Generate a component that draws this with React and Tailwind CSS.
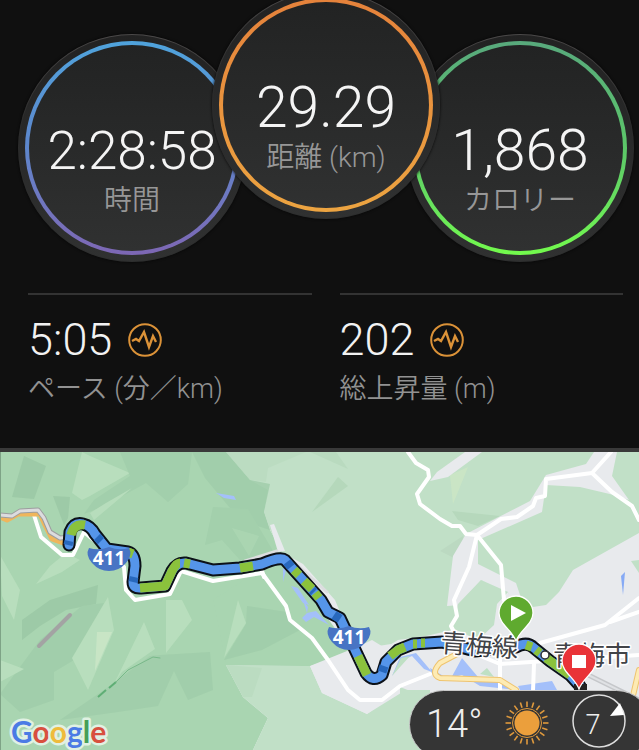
const TERRAIN = [
  { fill: "#9bc8a5", points: "24,456 46,466 34,499 12,497" },
  { fill: "#9bc8a5", points: "53,496 70,497 68,518 64,525" },
  { fill: "#bce1c0", points: "82,452 90,456 130,473 90,496 82,500 72,493 78,468" },
  { fill: "#a1ceab", points: "120,452 192,452 188,484 168,502 146,483 104,506 84,514 94,500 130,476" },
  { fill: "#bbe0bf", points: "132,488 94,520 90,513 106,503" },
  { fill: "#a0cdaa", points: "192,452 226,452 250,480 270,484 264,512 270,530 240,520 205,478" },
  { fill: "#a2cfac", points: "213,507 248,509 276,556 240,560 222,540 205,545" },
  { fill: "#abd6b2", points: "232,528 259,536 249,556" },
  { fill: "#bce1c0", points: "0,555 20,590 14,620 2,596" },
  { fill: "#bce1c0", points: "66,553 50,566 36,584 62,572 80,560" },
  { fill: "#9bc8a5", points: "50,600 98,585 96,604 66,610 40,626 22,640 22,620" },
  { fill: "#a0cdaa", points: "40,640 82,606 104,603 74,660 54,672 54,700 20,712 0,694" },
  { fill: "#bce1c0", points: "108,597 114,630 88,690 72,658" },
  { fill: "#d0eacb", points: "97,632 112,632 95,671" },
  { fill: "#bce1c0", points: "144,622 155,649 122,672 114,684" },
  { fill: "#bce1c0", points: "166,600 182,600 192,620 166,653" },
  { fill: "#bce1c0", points: "0,660 24,669 0,682" },
  { fill: "#bce1c0", points: "238,600 246,623 224,658" },
  { fill: "#a0cdaa", points: "160,655 210,652 213,690 188,700 174,671 158,706 118,712 60,720 104,690 150,656" },
  { fill: "#a0cdaa", points: "247,606 287,612 300,630 262,650 224,660 246,624" },
];

const PARKS = [
  { fill: "#c1e0c7", points: "226,452 639,452 639,533 573,570 559,592 546,605 533,607 516,611 506,588 481,580 457,605 452,630 426,636 398,640 385,648 372,640 355,648 335,600 303,564 283,553 270,530 264,512 268,490 250,480" },
  { fill: "#c1e0c7", points: "226,665 310,666 322,693 367,714 400,690 430,690 430,750 253,750 268,718 243,697" },
  { fill: "#bbdcc1", points: "226,452 306,452 268,468 266,482 250,480" },
  { fill: "#bbdcc1", points: "226,665 262,668 252,697 243,697" },
  { fill: "#b5d8bb", points: "338,477 348,486 312,512" },
  { fill: "#b9dabf", points: "310,452 336,452 348,469" },
  { fill: "#cae5c5", points: "450,475 468,467 453,504" },
  { fill: "#b6d8bc", points: "452,511 500,516 478,526 458,520" },
  { fill: "#bbd9c1", points: "463,536 462,562 440,551" },
];

const TOWNS = [
  "465,452 482,452 448,477 430,481 437,472",
  "594,452 617,452 612,476 629,500 614,495 580,487 546,485 542,512 478,540 478,564 516,583 523,604 512,615 508,592 481,580 460,605 447,606 453,556 466,534 530,501 546,475 586,464",
  "270,525 274,524 285,551 278,552",
];

const ROADS = [
  "33,512 41,537 62,555 73,555 84,532 108,552 124,567 126,590 135,600 170,594 181,571 213,581 262,573 286,606 290,620 312,638 328,660 348,690 360,700 382,700 400,686 430,674",
  "261,568 264,577",
  "408,452 416,463 428,470 429,477 417,494 420,504 440,519 452,526 460,526 466,534 477,535 501,519 517,517 533,506 536,498 545,496 546,479 592,473 611,452",
  "592,473 612,492 632,506 639,520",
  "477,535 469,567 454,600 457,616 451,626 458,640 478,655 500,664 639,655",
  "477,535 501,565 504,600 512,614",
  "540,643 605,625 639,598",
  "610,622 639,612",
  "500,640 500,691",
  "534,664 533,691",
];

const ROUTE =
  "M69 545 L70 532 Q74 522 83 524 Q91 526 95 534 L107 549 L128 552 Q135 554 135 566 L133 582 Q133 589 141 588 L165 586 L172 571 Q177 562 186 563 L213 570 L240 568 L262 564 Q280 556 285 560 L303 580 L321 600 L328 612 L340 618 L348 635 L366 673 Q373 683 382 675 L386 662 L398 650 L413 644 L442 642 L475 651 L516 647 Q527 641 534 648 L550 661 L570 675 L580 686";

const GREEN_LEGS = [
  "M71 535 Q74 523 85 525",
  "M128 552 L133 554",
  "M140 588 L165 586 L172 571 Q176 563 180 563",
  "M184 563 L190 564",
  "M240 568 L253 566",
  "M294 570 L299 575",
  "M304 581 L312 589",
  "M315 593 L319 598",
  "M358 656 L367 675",
  "M390 656 L398 650 L405 647",
  "M413 644 L417 644",
  "M421 643 L425 643",
  "M526 645 L532 647",
  "M536 650 L540 653",
  "M546 658 L570 675",
];

const DARK_LEGS = [
  "M68 545 L69 541",
  "M97 537 L101 541",
  "M134 577 L133 582",
  "M287 562 L291 567",
  "M312 590 L314 592",
  "M334 615 L340 619",
  "M382 672 L384 666",
];

function Line({ d, color, width, cap = "round" }) {
  return <path d={d} fill="none" stroke={color} strokeWidth={width} strokeLinecap={cap} strokeLinejoin="round" />;
}

function RouteBadge({ x, y }) {
  return (
    <g transform={`translate(${x} ${y})`}>
      <path d="M-20 -11 Q-10 -8 0 -12 Q10 -8 20 -11 Q24 -4 17 4 Q10 12 0 12 Q-10 12 -17 4 Q-24 -4 -20 -11Z" fill="#4874c4" />
      <text y="6" textAnchor="middle" fill="#fff" className="font-['Open_Sans',sans-serif] text-[19px] font-bold">411</text>
    </g>
  );
}

function Pin({ x, y, color, children }) {
  return (
    <g transform={`translate(${x} ${y})`}>
      <path d="M0 0 C-4 -11 -17 -17 -17 -28 A17 17 0 0 1 17 -28 C17 -17 4 -11 0 0Z" fill={color} stroke="#fff" strokeWidth="1.3" />
      {children}
    </g>
  );
}

function MapView() {
  return (
    <svg viewBox="0 452 639 298" className="block w-full" role="img" aria-label="Map">
      <rect y="452" width="639" height="298" fill="#e8eaed" />
      <polygon fill="#a9d5b1" points="0,452 226,452 250,480 270,482 264,512 270,530 283,553 345,652 310,666 226,665 243,697 268,718 253,750 0,750" />
      {PARKS.map((p) => <polygon key={p.points} {...p} />)}
      <polygon fill="#a9d5b1" points="275,560 290,566 352,652 310,666 226,665 213,600" />
      <polygon fill="#e8eaed" points="310,666 352,649 372,647 410,641 446,634 470,641 430,690 409,688 367,714 322,693" />
      <g opacity="0.8">
        {TERRAIN.map((p) => <polygon key={p.points} {...p} />)}
      </g>
      {TOWNS.map((points) => <polygon key={points} points={points} fill="#e8eaed" />)}
      <polygon fill="#c1e0c7" points="481,580 508,592 497,604 494,625 478,640 452,628 458,604" />
      <polygon fill="#c1e0c7" points="400,687 428,698 409,720 400,715" />
      <polygon fill="#c1e0c7" points="631,561 639,560 639,573" />
      <g fill="#a4c0fa">
        <polygon points="216,493 234,496 236,500 224,498" />
        <polygon points="291,586 298,588 309,605 303,603" />
        <polygon points="283,568 286,570 283,582" />
        <polygon points="303,600 308,607 307,613 316,611 329,625 314,617 306,622 302,618 307,613" />
        <polygon points="621,576 625,572 623,595" fill="#86aaf5" />
        <polygon points="392,676 400,657 416,653 432,672 424,669 412,656 403,660" />
        <polygon points="430,668 450,680 462,658 478,677 494,678 518,690 480,686 462,675 450,678 432,674" />
        <polygon points="518,686 552,681 557,690 520,690" />
      </g>
      <polygon fill="#bfe0c4" points="392,676 401,658 410,656" />
      <polygon fill="#bfe0c4" points="480,674 487,668 494,677" />
      <Line d="M39 646 L70 615" color="#a3a3a3" width="4" />
      <Line d="M98 697 L106 690 M109 688 L116 682" color="#5fae75" width="2" cap="butt" />
      <Line d="M116 682 L128 670 L153 657 L160 658" color="#79b98a" width="1" />
      {ROADS.map((p) => <polyline key={p} points={p} fill="none" stroke="#fff" strokeWidth="4" strokeLinejoin="round" strokeLinecap="round" />)}
      <Line d="M0 517 L7 520 L18 514 L40 514 L45 525 L52 539 L66 544" color="#efb65c" width="5" />
      <Line d="M0 515 L12 516 L20 511 L38 510 L44 518 L50 532 L60 538 L70 537" color="#9d9d9f" width="5" />
      <Line d="M0 515 L12 516 L20 511 L38 510 L44 518 L50 532 L60 538 L70 537" color="#dcdcde" width="3" />
      <Line d="M457 654 L440 663 Q430 674 440 678 L500 680 L516 690 M639 670 L632 700" color="#efc46f" width="6" />
      <Line d="M457 654 L440 663 Q430 674 440 678 L500 680 L516 690 M639 670 L632 700" color="#fdebb4" width="4" />
      <Line d="M566 664 L639 700" color="#c5c7ca" width="5" />
      <Line d="M566 664 L639 700" color="#dfe1e4" width="2" />
      <Line d="M245 561 L277 551 M292 560 L327 592" color="#dcdddf" width="3" />
      <Line d={ROUTE} color="#0c1118" width="13" />
      <Line d={ROUTE} color="#5595ea" width="9" />
      {GREEN_LEGS.map((d) => <Line key={d} d={d} color="#8bc23c" width="9" cap="butt" />)}
      {DARK_LEGS.map((d) => <Line key={d} d={d} color="#2868bd" width="9" cap="butt" />)}
      <RouteBadge x="109" y="559" />
      <RouteBadge x="349" y="638" />
      <g fill="#414347" stroke="#fff" strokeWidth="3" strokeLinejoin="round" className="font-['Noto_Sans_CJK_JP',sans-serif] text-[26px] font-normal [paint-order:stroke]">
        <text transform="translate(440 652) rotate(4)">青梅線</text>
        <text x="553" y="665">青梅市</text>
      </g>
      <circle cx="545" cy="655" r="4" fill="#fff" stroke="#2d2f33" strokeWidth="1.5" />
      <rect x="574" y="684" width="13" height="8" fill="#222" />
      <Pin x={516} y={641} color="#5faa2f">
        <path d="M-5 -36 L10 -28 L-5 -20Z" fill="#fff" />
      </Pin>
      <Pin x={579} y={689} color="#e93338">
        <rect x="-7" y="-34" width="14" height="13" fill="#fff" />
      </Pin>
      <text x="11" y="743" strokeWidth="5" strokeLinejoin="round" stroke="#e0f1e3" className="font-['Lato',sans-serif] text-[30px] font-bold [paint-order:stroke]">
        <tspan fill="#4b7be5">G</tspan>
        <tspan fill="#d8503f">o</tspan>
        <tspan fill="#efbb3c">o</tspan>
        <tspan fill="#4b7be5">g</tspan>
        <tspan fill="#469f56">l</tspan>
        <tspan fill="#d8503f">e</tspan>
      </text>
      <rect y="452" width="1" height="298" fill="#7ea386" />
    </svg>
  );
}

function Gauge({ value, label, ring, className, valueClass }) {
  return (
    <div className={`size-[228px] shrink-0 rounded-full bg-linear-to-b from-[#4a4848] via-[#2b2b2b] via-40% to-[#2d2e2e] p-px shadow-[0_0_3px_#050505] ${className}`}>
      <div className="size-full rounded-full bg-linear-to-b from-[#222] to-[#303131] p-[6px]">
        <div className={`size-full rounded-full bg-linear-to-b p-1 ${ring}`}>
          <div className="flex size-full flex-col items-center rounded-full bg-linear-to-b from-[#222323] to-[#303131] pt-[74px] whitespace-nowrap">
            <div className={`leading-[64px] font-light text-[#f4f4f4] ${valueClass}`}>{value}</div>
            <div className="text-[28px] leading-9 font-[350] text-[#979797]">{label}</div>
          </div>
        </div>
      </div>
    </div>
  );
}

function Stat({ value, label }) {
  return (
    <div className="border-t-2 border-[#333] pt-[18px]">
      <div className="flex items-center gap-4">
        <span className="text-[45px] leading-[54px] font-light text-[#f2f2f2]">{value}</span>
        <svg viewBox="0 0 34 34" className="size-[34px]" fill="none" stroke="#db9238" aria-hidden="true">
          <circle cx="17" cy="17" r="15.8" strokeWidth="2" />
          <path d="M4 18 L8 16 L11 18 L16 9 L21 24 L25 13 L28 19" strokeWidth="2.4" strokeLinejoin="miter" />
        </svg>
      </div>
      <div className="text-[27px] leading-[45px] font-[350] text-[#929292]">{label}</div>
    </div>
  );
}

function Weather() {
  return (
    <div className="absolute -right-3 -bottom-[9px] flex h-[69px] w-[242px] items-center rounded-full border border-[#c8c8c8] bg-[#353535] pl-4 text-[#eee]">
      <span className="w-[78px] text-[38px] font-light">14°</span>
      <svg viewBox="-23 -23 46 46" className="mb-1 size-[46px]" aria-hidden="true">
        <circle r="12.5" fill="#eb9f3c" />
        <circle r="14.5" fill="none" stroke="#e09a3d" strokeWidth="1" />
        {Array.from({ length: 20 }, (_, i) => (
          <path key={i} d="M0 -16 V-21.5" stroke="#e09a3d" strokeWidth="1.6" transform={`rotate(${i * 18})`} />
        ))}
      </svg>
      <div className="mb-2 ml-[22px] grid size-[54px] place-items-center">
        <svg viewBox="-27 -27 54 54" className="col-start-1 row-start-1 size-full" aria-hidden="true">
          <circle r="26" fill="none" stroke="#ddd" strokeWidth="1.5" />
          <path d="M21 -18 L11 -5 L25 -6Z" fill="#fff" />
        </svg>
        <span className="col-start-1 row-start-1 pt-2 pr-3 text-[27px] leading-8 font-light">7</span>
      </div>
    </div>
  );
}

export default function App() {
  return (
    <main className="w-full overflow-hidden bg-[#101010] font-['Roboto','Noto_Sans_CJK_JP',sans-serif]">
      <section className="flex items-start justify-center overflow-hidden pb-[31px] pl-[13px]">
        <Gauge value="2:28:58" label="時間" ring="from-[#4fa3dc] via-[#5d86cc] to-[#7d67b4]" valueClass="text-[53px]" className="mt-[34px]" />
        <Gauge value="29.29" label="距離 (km)" ring="from-[#e5823b] to-[#eca441]" valueClass="text-[57px]" className="relative z-10 -mx-[34px] mt-[-9px]" />
        <Gauge value="1,868" label="カロリー" ring="from-[#58a97c] via-[#5cc768] to-[#73fb4c]" valueClass="text-[57px]" className="mt-[34px]" />
      </section>
      <section className="grid grid-cols-2 gap-7 border-b-4 border-[#393939] pr-4 pb-9 pl-7">
        <Stat value="5:05" label="ペース (分／km)" />
        <Stat value="202" label="総上昇量 (m)" />
      </section>
      <section className="relative overflow-hidden">
        <MapView />
        <Weather />
      </section>
    </main>
  );
}
